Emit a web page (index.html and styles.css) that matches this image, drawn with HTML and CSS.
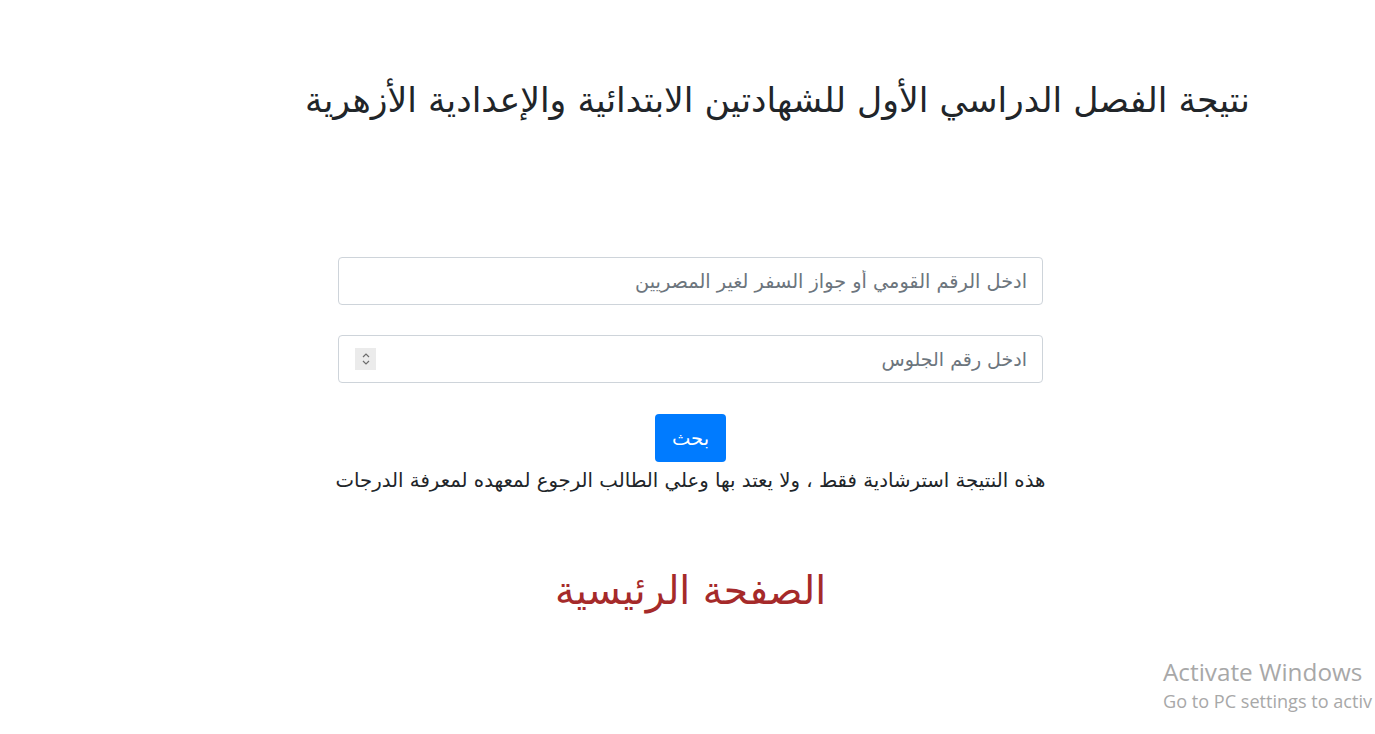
FILE: index.html
```html
<!DOCTYPE html>
<html lang="ar" dir="rtl">
<head>
<meta charset="utf-8">
<title>نتيجة الفصل الدراسي الأول</title>
<link rel="stylesheet" href="styles.css">
</head>
<body>
<div class="page">
  <header class="head">
    <h1 class="title">نتيجة الفصل الدراسي الأول للشهادتين الابتدائية والإعدادية الأزهرية</h1>
  </header>
  <form class="form">
    <input class="field" type="text" placeholder="ادخل الرقم القومي أو جواز السفر لغير المصريين">
    <div class="field num">
      <span class="ph">ادخل رقم الجلوس</span>
      <span class="spin"><svg width="10" height="18" viewBox="0 0 10 18"><path d="M2 7 L5 4 L8 7" fill="none" stroke="#6d6d6d" stroke-width="1.2"/><path d="M2 11 L5 14 L8 11" fill="none" stroke="#6d6d6d" stroke-width="1.2"/></svg></span>
    </div>
    <button class="btn" type="button">بحث</button>
    <p class="note">هذه النتيجة استرشادية فقط ، ولا يعتد بها وعلي الطالب الرجوع لمعهده لمعرفة الدرجات</p>
  </form>
  <a class="home" href="#">الصفحة الرئيسية</a>
</div>
<div class="activate" dir="ltr">
  <div class="a1">Activate Windows</div>
  <div class="a2">Go to PC settings to activ</div>
</div>
</body>
</html>
```
FILE: styles.css
```css
html, body {
  margin: 0;
  padding: 0;
  background: #fff;
  height: 100%;
  overflow: hidden;
}
body {
  font-family: "DejaVu Sans", "Noto Sans", sans-serif;
  color: #212529;
  position: relative;
}
.page {
  display: flex;
  flex-direction: column;
  align-items: center;
  padding-left: 6px;
}
.head {
  align-self: stretch;
  box-sizing: border-box;
  padding: 0 125px 0 0;
}
.title {
  font-size: 34.7px;
  font-weight: normal;
  margin: 76px 0 0 0;
  line-height: 48px;
  color: #212529;
  white-space: nowrap;
}
.form {
  margin-top: 133px;
  width: 705px;
  display: flex;
  flex-direction: column;
  align-items: center;
}
.field {
  box-sizing: border-box;
  width: 705px;
  height: 48px;
  border: 1px solid #ced4da;
  border-radius: 4px;
  padding: 0 15px;
  font-family: inherit;
  font-size: 19.3px;
  color: #495057;
  direction: rtl;
  outline: none;
  background: #fff;
}
.field::placeholder {
  color: #6c757d;
}
.num {
  margin-top: 30px;
  display: flex;
  align-items: center;
  justify-content: space-between;
}
.ph {
  color: #6c757d;
  font-size: 19px;
}
.spin {
  width: 21px;
  height: 22px;
  background: #ebebeb;
  display: flex;
  align-items: center;
  justify-content: center;
  margin-left: 1px;
}
.btn {
  margin-top: 31px;
  width: 71px;
  height: 48px;
  background: #007bff;
  color: #fff;
  border: none;
  border-radius: 4px;
  font-family: inherit;
  font-size: 19.5px;
}
.note {
  margin: 6px 0 0 0;
  font-size: 19.7px;
  white-space: nowrap;
  line-height: 26px;
}
.home {
  margin-top: 71px;
  font-size: 39.3px;
  color: #a52a2a;
  text-decoration: none;
  line-height: 52px;
}
.activate {
  position: absolute;
  left: 1163px;
  top: 655px;
  color: #a8a8a8;
  font-family: "Open Sans", "Noto Sans", sans-serif;
  white-space: nowrap;
}
.a1 {
  font-size: 24.3px;
  line-height: 33px;
}
.a2 {
  font-size: 18.1px;
  line-height: 26px;
}
```
